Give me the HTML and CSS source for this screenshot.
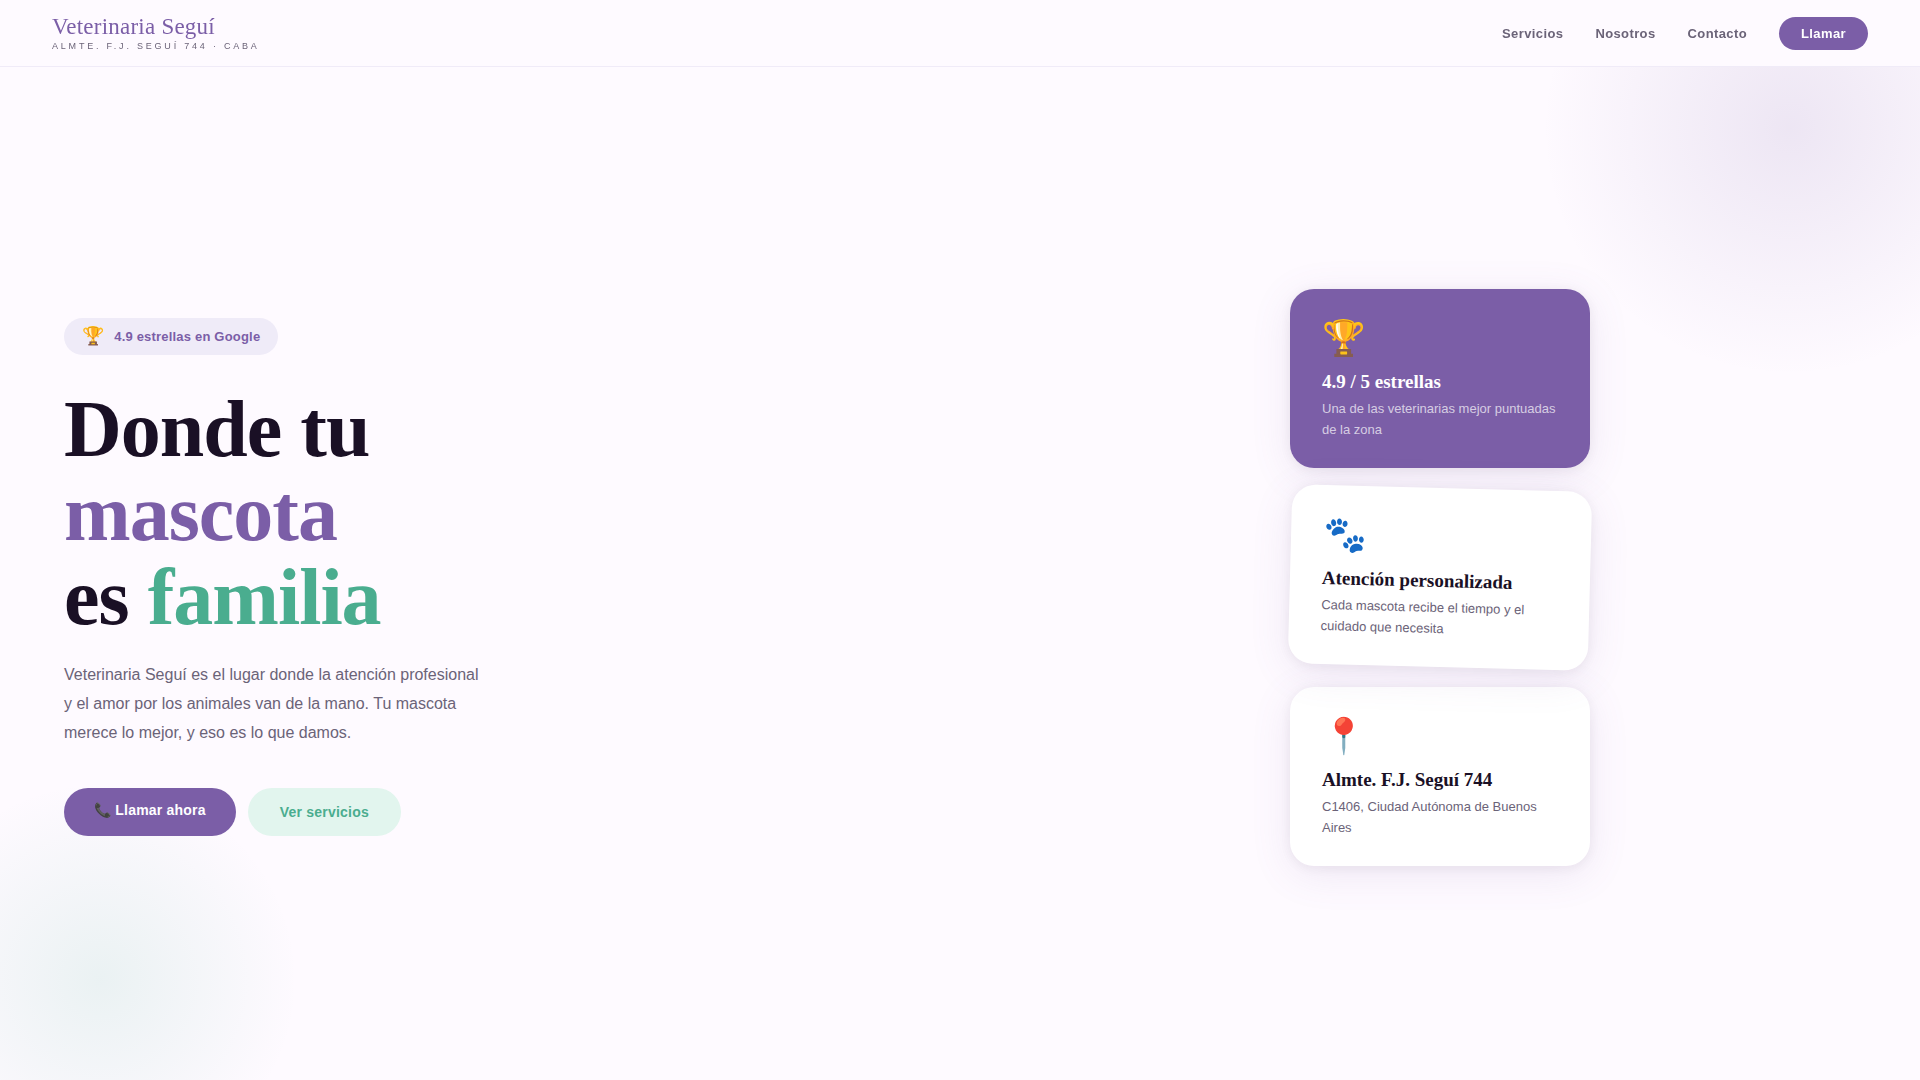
FILE: index.html
```
<!DOCTYPE html>
<html lang="es">
<head>
  <meta charset="UTF-8">
  <meta name="viewport" content="width=device-width, initial-scale=1.0">
  <title>Veterinaria Seguí</title>
  <link rel="stylesheet" href="styles.css">
</head>
<body>
  <nav class="nav">
    <div class="logo">
      <span class="logo-name">Veterinaria Seguí</span>
      <span class="logo-sub">Almte. F.J. Seguí 744 · CABA</span>
    </div>
    <div class="nav-links">
      <a href="#servicios">Servicios</a>
      <a href="#nosotros">Nosotros</a>
      <a href="#contacto">Contacto</a>
      <a href="tel:" class="nav-cta">Llamar</a>
    </div>
  </nav>

  <section class="hero">
    <div class="hero-left">
      <div class="badge"><span class="badge-icon">🏆</span><span>4.9 estrellas en Google</span></div>
      <h1>Donde tu<br><span class="purple">mascota</span><br>es <span class="green">familia</span></h1>
      <p class="hero-desc">Veterinaria Seguí es el lugar donde la atención profesional y el amor por los animales van de la mano. Tu mascota merece lo mejor, y eso es lo que damos.</p>
      <div class="hero-btns">
        <a href="tel:" class="btn-main">📞 Llamar ahora</a>
        <a href="#servicios" class="btn-soft">Ver servicios</a>
      </div>
    </div>

    <div class="hero-right">
      <div class="card card-purple">
        <div class="card-icon">🏆</div>
        <h3>4.9 / 5 estrellas</h3>
        <p>Una de las veterinarias mejor puntuadas de la zona</p>
      </div>
      <div class="card card-tilt">
        <div class="card-icon">🐾</div>
        <h3>Atención personalizada</h3>
        <p>Cada mascota recibe el tiempo y el cuidado que necesita</p>
      </div>
      <div class="card">
        <div class="card-icon">📍</div>
        <h3>Almte. F.J. Seguí 744</h3>
        <p>C1406, Ciudad Autónoma de Buenos Aires</p>
      </div>
    </div>
  </section>
</body>
</html>
```

FILE: styles.css
```
:root {
  --purple: #7b5ea7;
  --purple-light: #f0ebf8;
  --green: #4aad8f;
  --green-light: #e2f5ee;
  --dark: #1a1025;
  --gray: #6b6378;
  --bg: #fefaff;
}
* {
  margin: 0;
  padding: 0;
  box-sizing: border-box;
}
body {
  font-family: "Liberation Sans", Arial, sans-serif;
  background: var(--bg);
  color: var(--dark);
}
a {
  text-decoration: none;
}

/* Nav */
.nav {
  position: fixed;
  top: 0;
  left: 0;
  right: 0;
  z-index: 10;
  display: flex;
  justify-content: space-between;
  align-items: center;
  padding: 14px 52px;
  background: rgba(254, 250, 255, 0.96);
  border-bottom: 1px solid var(--purple-light);
}
.logo {
  display: flex;
  flex-direction: column;
}
.logo-name {
  font-family: "Liberation Serif", serif;
  font-size: 23px;
  line-height: 26px;
  letter-spacing: 0.01em;
  color: var(--purple);
}
.logo-sub {
  font-size: 9px;
  line-height: 12px;
  letter-spacing: 0.31em;
  text-transform: uppercase;
  color: var(--gray);
}
.nav-links {
  display: flex;
  align-items: center;
  gap: 32px;
}
.nav-links a {
  font-size: 13px;
  line-height: 15px;
  font-weight: 700;
  letter-spacing: 0.03em;
  color: var(--gray);
}
.nav-links .nav-cta {
  padding: 9px 22px;
  border-radius: 24px;
  background: var(--purple);
  color: #fff;
}

/* Hero */
.hero {
  position: relative;
  display: grid;
  grid-template-columns: 1fr 1fr;
  align-items: center;
  min-height: 100vh;
  padding-top: 74px;
  overflow: hidden;
}
.hero::before {
  content: "";
  position: absolute;
  top: -122px;
  right: -120px;
  width: 500px;
  height: 500px;
  background: radial-gradient(circle, rgba(123, 94, 167, 0.13), transparent 70%);
}
.hero::after {
  content: "";
  position: absolute;
  bottom: -100px;
  left: -100px;
  width: 400px;
  height: 400px;
  background: radial-gradient(circle, rgba(74, 173, 143, 0.11), transparent 70%);
}
.hero-left {
  position: relative;
  z-index: 1;
  padding: 0 64px;
}
.badge {
  display: inline-flex;
  align-items: center;
  gap: 10px;
  padding: 8px 18px;
  margin-bottom: 32px;
  border-radius: 24px;
  background: #efebf8;
  color: var(--purple);
  font-size: 13px;
  font-weight: 700;
  letter-spacing: 0.015em;
}
.badge-icon {
  font-size: 18px;
  line-height: 21px;
}
h1 {
  margin-bottom: 21px;
  font-family: "Liberation Serif", serif;
  font-size: 80px;
  line-height: 84px;
  letter-spacing: -1px;
}
.purple {
  color: var(--purple);
}
.green {
  color: var(--green);
}
.hero-desc {
  max-width: 420px;
  margin-bottom: 41px;
  font-size: 16px;
  line-height: 29px;
  color: var(--gray);
}
.hero-btns {
  display: flex;
  gap: 12px;
}
.btn-main,
.btn-soft {
  border-radius: 24px;
  font-size: 14px;
  line-height: 16px;
  font-weight: 700;
  letter-spacing: 0.015em;
}
.btn-main {
  padding: 14px 30px;
  background: var(--purple);
  color: #fff;
}
.btn-soft {
  padding: 16px 32px;
  background: var(--green-light);
  color: var(--green);
}

/* Cards */
.hero-right {
  position: relative;
  display: flex;
  flex-direction: column;
  align-items: center;
  gap: 20px;
}
.card {
  width: 300px;
  padding: 28px 32px;
  border-radius: 24px;
  background: #fff;
  box-shadow: 0 8px 40px rgba(123, 94, 167, 0.12), 0 2px 12px rgba(26, 16, 37, 0.06);
}
.card-tilt {
  transform: rotate(1.5deg);
}
.card-icon {
  margin-bottom: 12px;
  font-size: 35px;
  line-height: 42px;
}
.card h3 {
  margin-bottom: 5px;
  font-family: "Liberation Serif", serif;
  font-size: 19px;
  line-height: 22px;
}
.card p {
  font-size: 13px;
  line-height: 21px;
  color: var(--gray);
}
.card-purple {
  background: var(--purple);
  color: #fff;
}
.card-purple p {
  color: rgba(255, 255, 255, 0.7);
}

@media (max-width: 900px) {
  .hero {
    grid-template-columns: 1fr;
    gap: 48px;
    padding-bottom: 48px;
  }
}
```
